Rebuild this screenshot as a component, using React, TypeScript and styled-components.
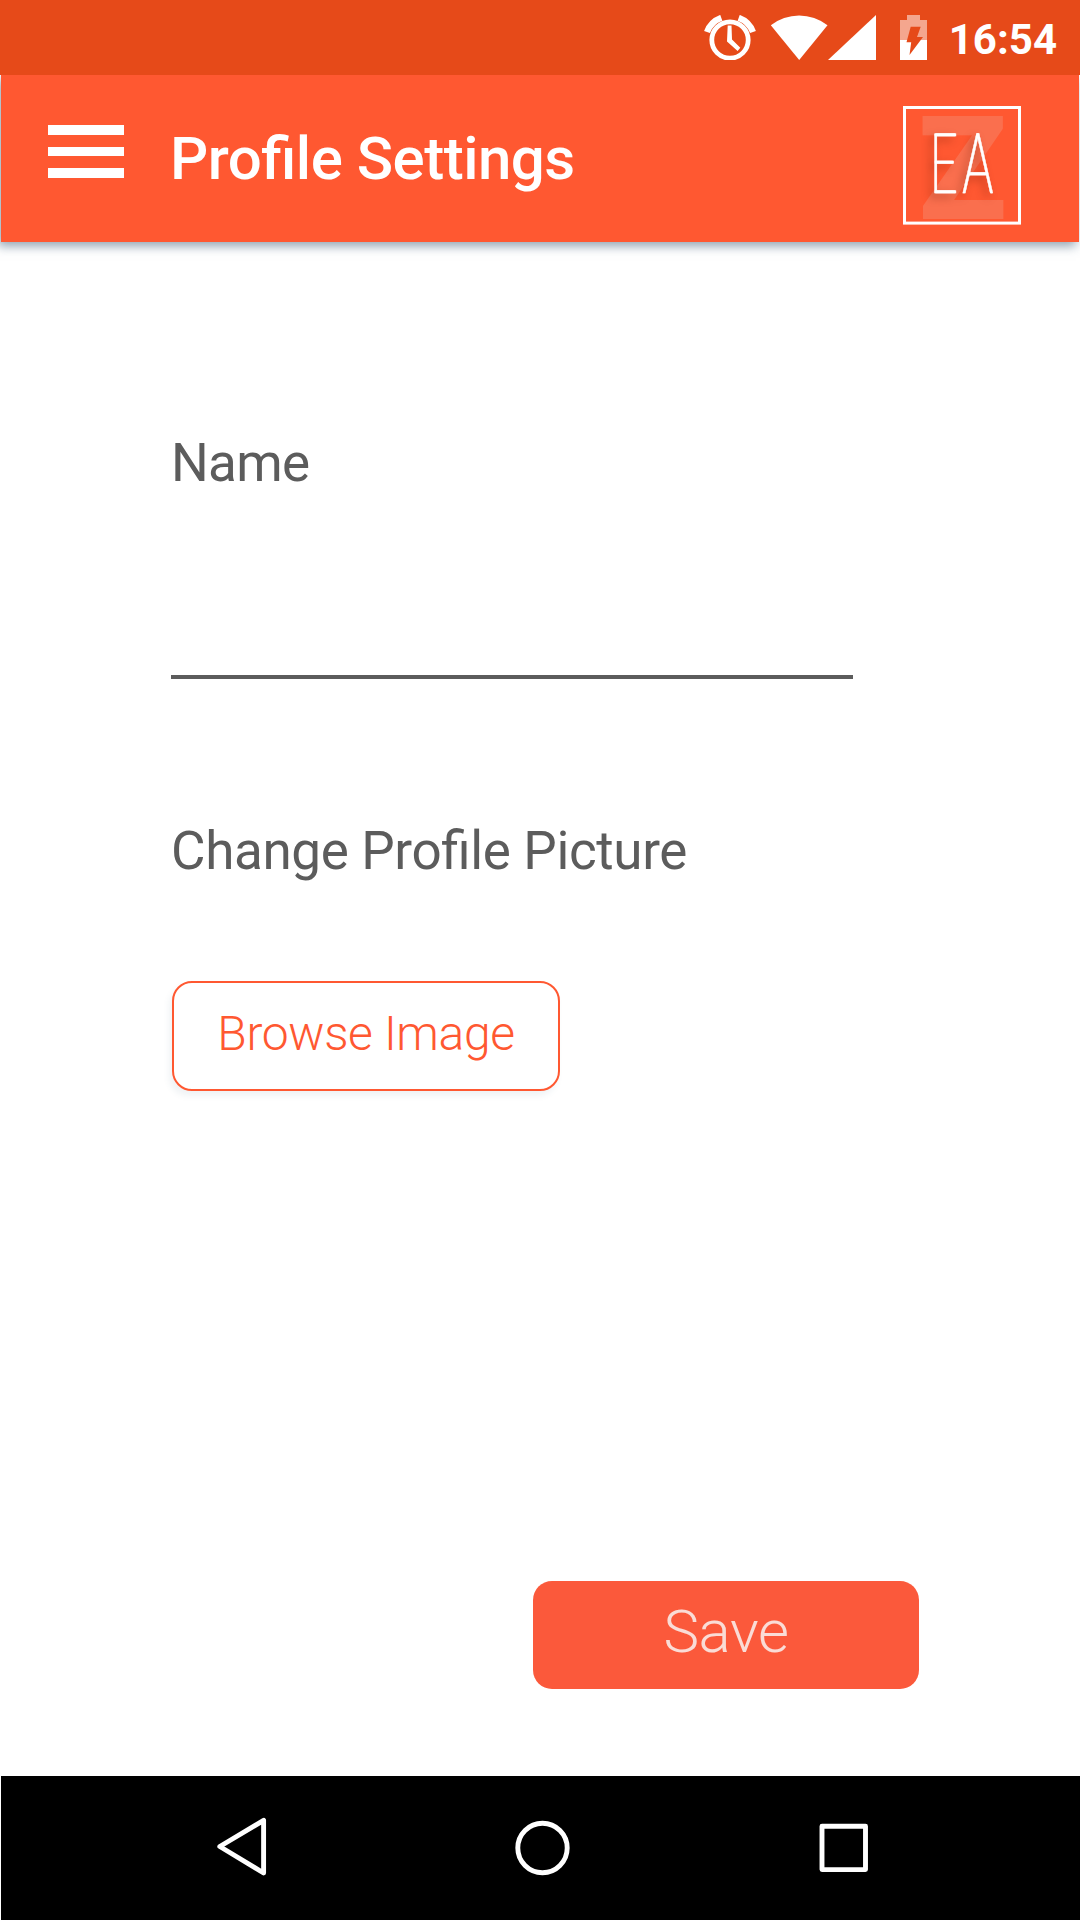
import React from "react";
import styled, { createGlobalStyle } from "styled-components";

const GlobalStyle = createGlobalStyle`
  *, *::before, *::after { box-sizing: border-box; }
  body { margin: 0; background: #fff; }
  button, input { font: inherit; }
`;

const Screen = styled.div`
  width: 1080px;
  height: 1920px;
  display: flex;
  flex-direction: column;
  overflow: hidden;
  background: #fff;
  font-family: Roboto, "Noto Sans", sans-serif;
  font-feature-settings: "liga" 1;
`;

const StatusBar = styled.div`
  flex: none;
  height: 75px;
  display: flex;
  align-items: flex-start;
  justify-content: flex-end;
  padding: 15px 23px 0 0;
  background: #e64a19;
  color: #fff;
`;

const StatusIcon = styled.svg<{ $gap: number }>`
  flex: none;
  display: block;
  margin-right: ${(p) => p.$gap}px;
`;

const Clock = styled.span`
  margin-top: 1px;
  font-size: 42px;
  line-height: 48px;
  font-weight: 700;
`;

const AppBar = styled.header`
  flex: none;
  height: 167px;
  margin: 0 1px;
  display: flex;
  align-items: flex-start;
  padding: 31px 58px 0 47px;
  background: #ff5831;
  color: #fff;
  box-shadow: -3px 4px 10px rgba(70, 100, 125, 0.6);
  clip-path: inset(0 -1px -20px -1px);
`;

const MenuButton = styled.button`
  width: 76px;
  height: 53px;
  margin: 19px 50px 0 0;
  padding: 0;
  border: 0;
  background: none;
  display: flex;
  flex-direction: column;
  justify-content: space-between;
`;

const MenuBar = styled.span`
  width: 76px;
  height: 9.6px;
  background: #fff;
`;

const Title = styled.h1`
  flex: 1;
  margin: 18px 0 0 -4px;
  font-size: 60px;
  line-height: 70px;
  font-weight: 500;
  letter-spacing: -0.5px;
`;

const Logo = styled.svg`
  flex: none;
  display: block;
  overflow: visible;
`;

const Initials = styled.g`
  font-size: 84px;
  font-weight: 100;
  fill: #fff;
  stroke: #fff;
  stroke-width: 0.7;
  filter: drop-shadow(1px 0 0 #fff) drop-shadow(-4px 4px 4px rgba(90, 20, 0, 0.4));
`;

const Form = styled.main`
  flex: 1;
  display: flex;
  flex-direction: column;
  align-items: flex-start;
  padding: 190px 161px 87px 171px;
`;

const Label = styled.label<{ $tracking?: number }>`
  font-size: 53px;
  line-height: 62px;
  letter-spacing: ${(p) => p.$tracking ?? -0.36}px;
  color: #5c5c5c;
`;

const NameInput = styled.input`
  width: 682px;
  height: 185px;
  margin-bottom: 141px;
  padding: 90px 0 0;
  border: 0;
  border-bottom: 4px solid #5c5c5c;
  background: none;
  font-size: 53px;
  outline: none;
`;

const BrowseButton = styled.button`
  width: 388px;
  height: 110px;
  margin: 99px 0 0 1px;
  padding: 0 0 6px;
  border: 2px solid #ff5831;
  border-radius: 20px;
  background: #fff;
  color: #ff5831;
  font-size: 48px;
  font-weight: 300;
  letter-spacing: -0.36px;
  box-shadow: -3px 5px 6px rgba(70, 100, 130, 0.08);
`;

const SaveButton = styled.button`
  width: 386px;
  height: 108px;
  margin-top: auto;
  align-self: flex-end;
  padding: 0 0 7px;
  border: 0;
  border-radius: 19px;
  background: #fb593b;
  color: #fadcd6;
  font-size: 60px;
  font-weight: 300;
  letter-spacing: -0.4px;
`;

const NavBar = styled.nav`
  flex: none;
  height: 144px;
  margin-left: 1px;
  display: flex;
  justify-content: space-between;
  padding: 40px 210px 0 214px;
  background: #000;
`;

const NavButton = styled.button`
  height: 62px;
  padding: 0;
  border: 0;
  background: none;
`;

const NavIcon = styled.svg`
  display: block;
  fill: none;
  stroke: #fff;
  stroke-width: 4.9;
  stroke-linejoin: round;
`;

function AlarmIcon() {
  return (
    <StatusIcon $gap={14} width="52" height="45" viewBox="0 0 52 45" fill="none" stroke="#fff">
      <circle cx="26" cy="25" r="18.2" strokeWidth="4.8" />
      <path d="M3 17 A24 24 0 0 1 17.3 2.8" strokeWidth="6.2" />
      <path d="M49 17 A24 24 0 0 0 34.7 2.8" strokeWidth="6.2" />
      <path d="M23.7 10.5 H27.5 L28 24.5 L36.3 32.7 L33.6 36 L23 26.5 Z" fill="#fff" stroke="none" />
    </StatusIcon>
  );
}

function WifiIcon() {
  return (
    <StatusIcon $gap={0} width="58" height="45" viewBox="0 0 58 45" fill="#fff">
      <path d="M0.8 10.3 A46 46 0 0 1 57.5 10.3 L29.2 45 Z" />
    </StatusIcon>
  );
}

function SignalIcon() {
  return (
    <StatusIcon $gap={24} width="48" height="45" viewBox="0 0 48 45" fill="#fff">
      <path d="M0 45 L48 0 V45 Z" />
    </StatusIcon>
  );
}

function BatteryIcon() {
  return (
    <StatusIcon $gap={22} width="27" height="45" viewBox="0 0 27 45">
      <path d="M7 0 H20 V5 H27 V25 H0 V5 H7 Z" fill="#f4a68e" />
      <path d="M0 25 H27 V45 H0 Z" fill="#fff" />
      <path d="M10.7 11.7 H20.7 L17 22 H23 L9.5 40 L11.2 27.3 H6.5 Z" fill="#e64a19" />
    </StatusIcon>
  );
}

function BrandLogo() {
  return (
    <Logo width="118" height="119" viewBox="0 0 118 119" role="img" aria-label="EA">
      <rect x="1.5" y="1.5" width="115" height="115.6" fill="none" stroke="#fff" strokeWidth="3" />
      <text x="15.3" y="113" fontSize="145" fontWeight="900" fill="#e4e0dd" opacity="0.17">
        Z
      </text>
      <Initials>
        <text transform="translate(27 87) scale(.56 1)">E</text>
        <text transform="translate(59 87) scale(.61 1)">A</text>
      </Initials>
    </Logo>
  );
}

export default function App() {
  return (
    <Screen>
      <GlobalStyle />
      <StatusBar>
        <AlarmIcon />
        <WifiIcon />
        <SignalIcon />
        <BatteryIcon />
        <Clock>16:54</Clock>
      </StatusBar>
      <AppBar>
        <MenuButton aria-label="Menu">
          <MenuBar />
          <MenuBar />
          <MenuBar />
        </MenuButton>
        <Title>Profile Settings</Title>
        <BrandLogo />
      </AppBar>
      <Form>
        <Label htmlFor="name" $tracking={-0.7}>Name</Label>
        <NameInput id="name" />
        <Label as="span">Change Profile Picture</Label>
        <BrowseButton>Browse Image</BrowseButton>
        <SaveButton>Save</SaveButton>
      </Form>
      <NavBar>
        <NavButton aria-label="Back">
          <NavIcon width="52" height="62" viewBox="0 0 52 62">
            <path d="M4.8 30.5 L48.6 4.3 V57 Z" />
          </NavIcon>
        </NavButton>
        <NavButton aria-label="Home">
          <NavIcon width="58" height="62" viewBox="0 0 58 62">
            <circle cx="28.5" cy="32" r="24.7" />
          </NavIcon>
        </NavButton>
        <NavButton aria-label="Recent apps">
          <NavIcon width="52" height="62" viewBox="0 0 52 62">
            <path d="M4 10.3 H47.5 V53.6 H4 Z" />
          </NavIcon>
        </NavButton>
      </NavBar>
    </Screen>
  );
}
